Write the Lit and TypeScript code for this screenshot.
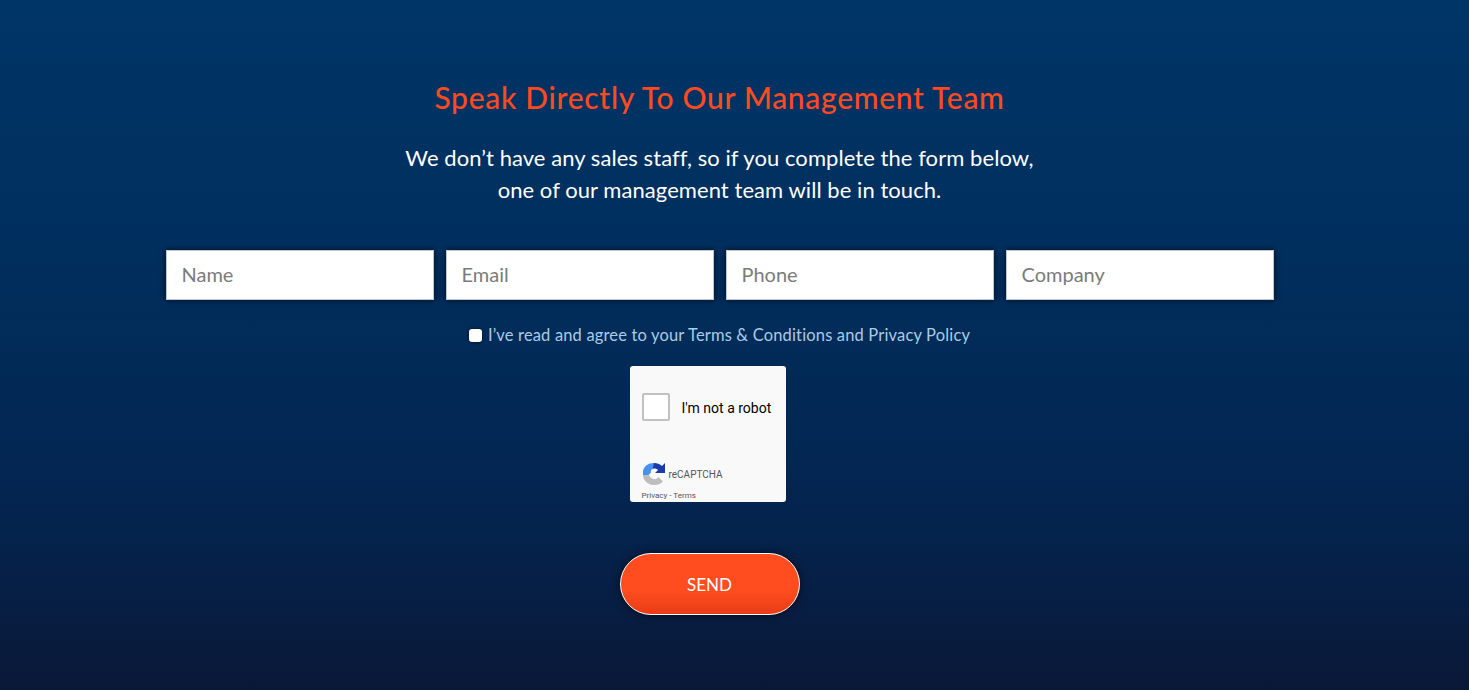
import { LitElement, html, css } from "lit";
import { customElement } from "lit/decorators.js";

@customElement("app-root")
export class AppRoot extends LitElement {
  static styles = css`
    :host { display: block; }
    .page {
      height: 690px; box-sizing: border-box; overflow: hidden;
      background: linear-gradient(180deg, #003567 0%, #002f5e 35%, #04244f 75%, #0a1837 100%);
      display: flex; flex-direction: column; align-items: center;
      padding: 79px 30px 0 0;
      font-family: Lato, sans-serif; color: #fff;
    }
    h1 {
      margin: 0; height: 38px; line-height: 36px; font-size: 30px; font-weight: 500; color: #ff4a1f;
      letter-spacing: 0.7px; white-space: nowrap;
    }
    .lead {
      margin: 25px 0 0; text-align: center; font-size: 22px; line-height: 32px; font-weight: 400;
      letter-spacing: 0.06px;
    }
    .fields { display: flex; gap: 12px; margin-top: 44px; }
    .field {
      width: 268px; height: 50px; box-sizing: border-box; background: #fff;
      border: 1px solid #c4c8cc; box-shadow: 0 0 6px rgba(0,0,0,.75);
      padding: 0 15px 2px; display: flex; align-items: center;
      font-size: 20px; color: #7b7b7b;
    }
    .agree {
      display: flex; align-items: center; gap: 6px; margin-top: 24px; height: 22px;
      color: #a9cbe6; font-size: 16.5px; letter-spacing: 0.16px;
    }
    .box {
      width: 13px; height: 13px; background: #fff; border-radius: 3px;
      box-shadow: 0 0 3px rgba(0,0,0,.8);
    }
    .captcha {
      width: 156px; height: 136px; margin: 20px 24px 0 0; box-sizing: border-box;
      background: #f9f9f9; border-radius: 3px; color: #000;
      font-family: Roboto, sans-serif; display: flex; flex-direction: column;
      padding: 27px 0 0 12px;
    }
    .robot { display: flex; align-items: center; gap: 12px; font-size: 14px; height: 28px; padding-top: 2px; margin-top: -1px; }
    .check { width: 28px; height: 28px; box-sizing: border-box; background: #fff; border: 2px solid #c1c1c1; border-radius: 2px; margin-top: -2px; }
    .brand { display: flex; align-items: center; margin-top: 40px; height: 24px; font-size: 10px; color: #555; }
    .brand svg { width: 24px; height: 24px; margin-right: 3px; }
    .legal { font-size: 8px; font-weight: 400; color: #555; margin-top: 4px; line-height: 12px; }
    .send {
      width: 180px; height: 62px; margin: 51px 20px 0 0; box-sizing: border-box;
      border: 1px solid #fff; border-radius: 31px; color: #fff;
      background: linear-gradient(180deg, #ff4d20 0%, #ff4d20 60%, #e93c15 100%);
      box-shadow: 0 0 8px rgba(0,0,0,.6);
      display: flex; align-items: center; justify-content: center; font-size: 17px;
    }
  `;
  render() {
    return html`<div class="page">
      <h1>Speak Directly To Our Management Team</h1>
      <p class="lead">We don’t have any sales staff, so if you complete the form below,<br />one of our management team will be in touch.</p>
      <div class="fields">
        ${["Name", "Email", "Phone", "Company"].map((f) => html`<div class="field">${f}</div>`)}
      </div>
      <div class="agree"><span class="box"></span><span>I’ve read and agree to your Terms &amp; Conditions and Privacy Policy</span></div>
      <div class="captcha">
        <div class="robot"><span class="check"></span><span>I'm not a robot</span></div>
        <div class="brand">
          <svg viewBox="0 0 24 24">
            <path fill="#bdbdbd" d="M1 13 H7 C8 14 8 16.500 12 17 C14 17.500 15.500 16.500 16.500 15 L21 19.500 C19 22 15.500 23 12 23 C6 23 1 18.500 1 13 Z"/>
            <path fill="#4a90f0" d="M1 13 V9 C2 4.500 6 1 12 1 L14 1 L10.500 7 C9 8 8.500 9 9 10.500 L6.500 13 Z"/>
            <path fill="#1c3aa9" d="M12 1 C15 1 18 2 20 4 L23 1 V11 H13 L16 8 C15 7 14 6.500 12 6.500 L10.500 7 Z"/>
          </svg>
          <span>reCAPTCHA</span>
        </div>
        <div class="legal">Privacy - Terms</div>
      </div>
      <div class="send">SEND</div>
    </div>`;
  }
}
